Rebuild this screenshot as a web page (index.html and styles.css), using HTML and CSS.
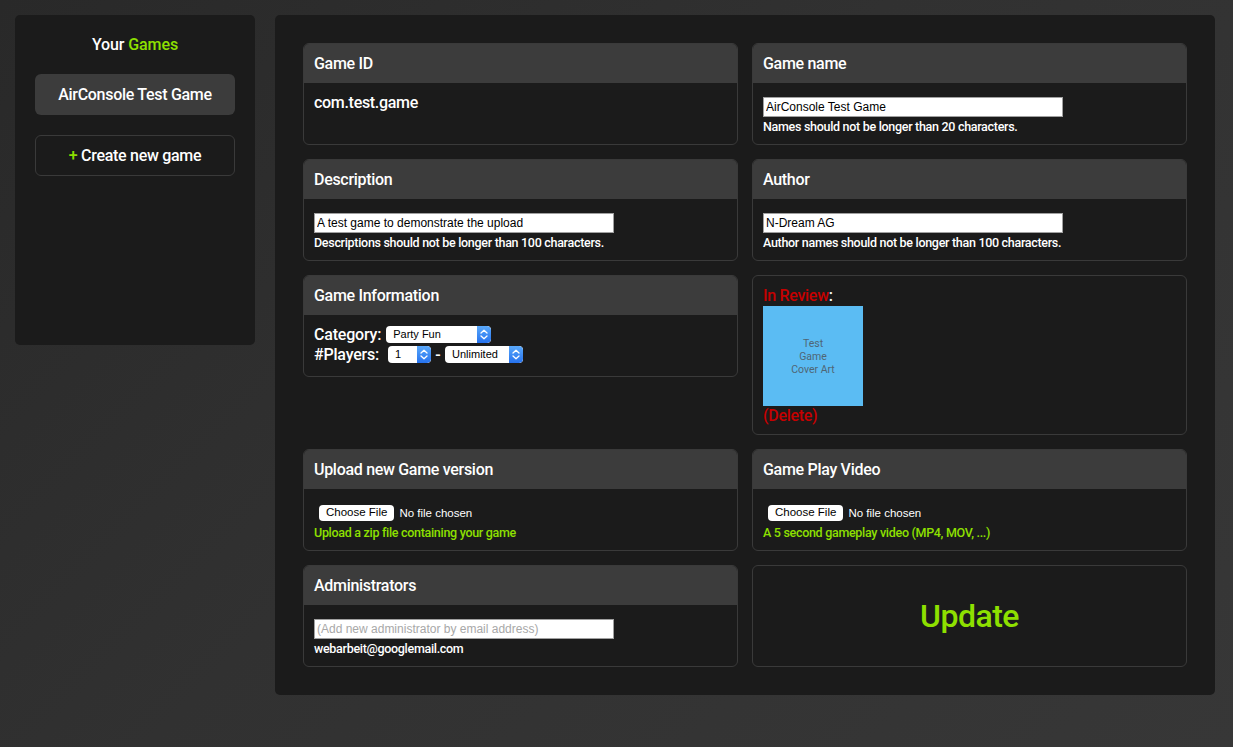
FILE: index.html
```html
<!DOCTYPE html>
<html lang="en">
<head>
<meta charset="utf-8">
<title>AirConsole Developer - Edit Game</title>
<link rel="stylesheet" href="styles.css">
</head>
<body>
<div class="page">
  <aside class="sidebar">
    <div class="side-title">Your <span class="green">Games</span></div>
    <div class="side-btn side-btn-active">AirConsole Test Game</div>
    <div class="side-btn side-btn-outline"><span><span class="green">+</span> Create new game</span></div>
  </aside>

  <main class="main">
    <div class="grid">
      <section class="card">
        <div class="card-head">Game ID</div>
        <div class="card-body body-id">com.test.game</div>
      </section>

      <section class="card">
        <div class="card-head">Game name</div>
        <div class="card-body">
          <input class="text-input" type="text" value="AirConsole Test Game">
          <div class="hint">Names should not be longer than 20 characters.</div>
        </div>
      </section>

      <section class="card">
        <div class="card-head">Description</div>
        <div class="card-body">
          <input class="text-input" type="text" value="A test game to demonstrate the upload">
          <div class="hint">Descriptions should not be longer than 100 characters.</div>
        </div>
      </section>

      <section class="card">
        <div class="card-head">Author</div>
        <div class="card-body">
          <input class="text-input" type="text" value="N-Dream AG">
          <div class="hint">Author names should not be longer than 100 characters.</div>
        </div>
      </section>

      <section class="card">
        <div class="card-head">Game Information</div>
        <div class="card-body body-info">
          <div class="info-row">
            <span class="info-label">Category:</span>
            <span class="select sel-cat"><span class="sel-text">Party Fun</span><span class="sel-arrow"><svg width="8" height="11" viewBox="0 0 8 11"><path d="M1 4 L4 1.2 L7 4 M1 7 L4 9.8 L7 7" fill="none" stroke="#fff" stroke-width="1.3" stroke-linecap="round" stroke-linejoin="round"/></svg></span></span>
          </div>
          <div class="info-row">
            <span class="info-label lbl-players">#Players:</span>
            <span class="select sel-one"><span class="sel-text">1</span><span class="sel-arrow"><svg width="8" height="11" viewBox="0 0 8 11"><path d="M1 4 L4 1.2 L7 4 M1 7 L4 9.8 L7 7" fill="none" stroke="#fff" stroke-width="1.3" stroke-linecap="round" stroke-linejoin="round"/></svg></span></span>
            <span class="dash">-</span>
            <span class="select sel-unl"><span class="sel-text">Unlimited</span><span class="sel-arrow"><svg width="8" height="11" viewBox="0 0 8 11"><path d="M1 4 L4 1.2 L7 4 M1 7 L4 9.8 L7 7" fill="none" stroke="#fff" stroke-width="1.3" stroke-linecap="round" stroke-linejoin="round"/></svg></span></span>
          </div>
        </div>
      </section>

      <section class="card card-review">
        <div class="review-title"><span class="red">In Review</span>:</div>
        <div class="cover">Test<br>Game<br>Cover Art</div>
        <div class="red review-delete">(Delete)</div>
      </section>

      <section class="card">
        <div class="card-head">Upload new Game version</div>
        <div class="card-body">
          <div class="file-row"><span class="file-btn">Choose File</span><span class="file-name">No file chosen</span></div>
          <div class="hint green">Upload a zip file containing your game</div>
        </div>
      </section>

      <section class="card">
        <div class="card-head">Game Play Video</div>
        <div class="card-body">
          <div class="file-row"><span class="file-btn">Choose File</span><span class="file-name">No file chosen</span></div>
          <div class="hint green">A 5 second gameplay video (MP4, MOV, ...)</div>
        </div>
      </section>

      <section class="card">
        <div class="card-head">Administrators</div>
        <div class="card-body">
          <input class="text-input" type="text" placeholder="(Add new administrator by email address)">
          <div class="hint">webarbeit@googlemail.com</div>
        </div>
      </section>

      <section class="card card-update">
        <span class="update">Update</span>
      </section>
    </div>
  </main>
</div>
</body>
</html>
```

FILE: styles.css
```css
html, body {
  margin: 0;
  padding: 0;
  height: 100%;
}

body {
  background: linear-gradient(135deg, #292929 0%, #313131 45%, #373737 100%);
  color: #fff;
  font-family: Roboto, "Liberation Sans", sans-serif;
  font-weight: 500;
  min-height: 747px;
}

.page {
  display: flex;
  align-items: flex-start;
  gap: 20px;
  padding: 15px 0 0 15px;
}

.green { color: #8ee000; }
.red { color: #c60000; }

.sidebar {
  width: 240px;
  height: 330px;
  box-sizing: border-box;
  background: #1b1b1b;
  border-radius: 5px;
  padding: 20px 20px;
  display: flex;
  flex-direction: column;
}

.side-title {
  text-align: center;
  font-size: 16px;
  line-height: 20px;
  margin-bottom: 19px;
  letter-spacing: -0.1px;
}

.side-btn {
  height: 41px;
  box-sizing: border-box;
  border-radius: 6px;
  display: flex;
  align-items: center;
  justify-content: center;
  font-size: 16px;
  letter-spacing: -0.3px;
}

.side-btn-active {
  background: #3c3c3c;
  margin-bottom: 20px;
}

.side-btn-outline {
  border: 1px solid #3a3a3a;
}

.main {
  width: 940px;
  height: 680px;
  box-sizing: border-box;
  background: #1b1b1b;
  border-radius: 5px;
  padding: 28px;
}

.grid {
  display: grid;
  grid-template-columns: 435px 435px;
  column-gap: 14px;
  row-gap: 14px;
  align-items: start;
}

.card {
  border: 1px solid #3a3a3a;
  border-radius: 6px;
  overflow: hidden;
  background: #1b1b1b;
}

.card-head {
  height: 39px;
  background: #3c3c3c;
  display: flex;
  align-items: center;
  padding: 0 10px;
  font-size: 16px;
  letter-spacing: -0.3px;
}

.card-body {
  padding: 14px 10px 9px;
}

.body-id {
  padding-top: 10px;
  height: 61px;
  box-sizing: border-box;
  font-size: 16px;
  line-height: 20px;
  letter-spacing: -0.3px;
}

.text-input {
  display: block;
  width: 300px;
  height: 20px;
  box-sizing: border-box;
  margin: 0;
  padding: 1px 2px;
  border: 1px solid #a0a0a0;
  border-radius: 0;
  background: #fff;
  color: #000;
  font-family: "Liberation Sans", Arial, sans-serif;
  font-size: 12px;
  outline: none;
}

.text-input::placeholder {
  color: #a8a8a8;
}

.hint {
  margin-top: 2px;
  font-size: 12.5px;
  line-height: 16px;
  letter-spacing: -0.3px;
}

.body-info {
  padding: 9px 10px 12px;
}

.info-row {
  height: 20px;
  display: flex;
  align-items: center;
}

.info-label {
  font-size: 16px;
  letter-spacing: -0.2px;
  margin-right: 5px;
}

.lbl-players {
  margin-right: 9px;
}

.select {
  display: inline-flex;
  height: 17px;
  box-sizing: border-box;
  background: #fff;
  border-radius: 4px;
  overflow: hidden;
  color: #000;
  font-family: "Liberation Sans", Arial, sans-serif;
  font-weight: 400;
  font-size: 11px;
  align-items: stretch;
}

.sel-text {
  flex: 1;
  display: flex;
  align-items: center;
  padding-left: 7px;
}

.sel-arrow {
  width: 14px;
  background: linear-gradient(#5aa9fb, #2672ee);
  display: flex;
  align-items: center;
  justify-content: center;
  border-radius: 0 4px 4px 0;
}

.sel-cat { width: 105px; }
.sel-one { width: 43px; }
.sel-unl { width: 78px; }

.dash {
  width: 14px;
  text-align: center;
  font-size: 16px;
}

.card-review {
  padding: 10px 10px 8px;
}

.review-title {
  font-size: 16px;
  line-height: 20px;
  letter-spacing: -0.3px;
}

.cover {
  width: 100px;
  height: 100px;
  background: #5bbcf3;
  color: #4f6675;
  font-size: 10.5px;
  line-height: 13px;
  font-weight: 400;
  display: flex;
  align-items: center;
  justify-content: center;
  text-align: center;
}

.review-delete {
  font-size: 16px;
  line-height: 20px;
  letter-spacing: -0.3px;
}

.file-row {
  height: 20px;
  display: flex;
  align-items: center;
  padding-left: 5px;
  font-family: "Liberation Sans", Arial, sans-serif;
  font-weight: 400;
  font-size: 11.5px;
}

.file-btn {
  background: #fff;
  color: #000;
  border-radius: 4px;
  padding: 1px 7px 2px;
  line-height: 13px;
  margin-right: 5px;
}

.card-update {
  height: 102px;
  box-sizing: border-box;
  display: flex;
  align-items: center;
  justify-content: center;
}

.update {
  font-size: 32px;
  color: #8ee000;
  letter-spacing: -0.5px;
}
```
